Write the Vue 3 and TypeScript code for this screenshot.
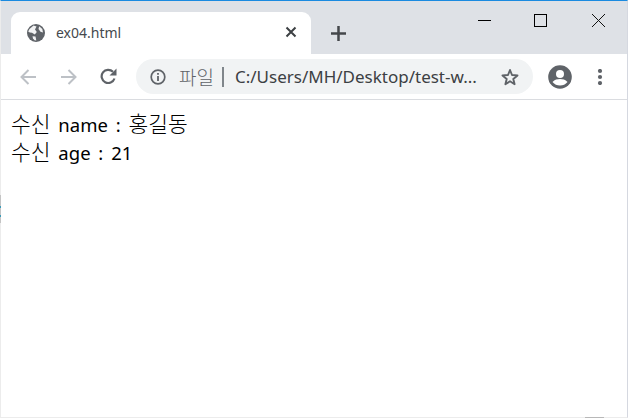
<script setup lang="ts">
// hangul runs are set larger than the latin ones, Noto's hangul is narrower than the original font
const lines = [
  [{ t: "수신", ko: true }, { t: " name : ", ko: false }, { t: "홍길동", ko: true }],
  [{ t: "수신", ko: true }, { t: " age : 21", ko: false }],
];
</script>

<template>
  <div class="window">
    <div class="tabstrip">
      <div class="tab">
        <svg class="globe" width="18" height="18" viewBox="0 0 18 18">
          <circle cx="9" cy="9" r="9" fill="#5f6368" />
          <path d="M2.500 5 6.500 1.600 9.500 2.500 8 5.500 9.800 8 7.800 10.500 5 8.800 2.800 8.500 1.200 7.500Z" fill="#f1f2f3" />
          <path d="M5.500 12.300 8.500 12.500 9.300 16.600 7.500 16.300 6 14.500Z" fill="#f1f2f3" />
          <path d="M12.200 2.200 15.300 5 16 8.500 13.500 7.800 11.500 5Z" fill="#f1f2f3" />
        </svg>
        <span class="tab-title">ex04.html</span>
        <svg class="tab-close" width="12" height="12" viewBox="0 0 12 12">
          <path d="M1.500 1.500 10.500 10.500M10.500 1.500 1.500 10.500" stroke="#3c4043" stroke-width="2" fill="none" />
        </svg>
      </div>
      <svg class="newtab" width="15" height="15" viewBox="0 0 15 15">
        <path d="M7.500 0V15M0 7.500H15" stroke="#44474b" stroke-width="2.500" fill="none" />
      </svg>
      <div class="controls">
        <svg class="ctl ctl-min" width="13" height="13" viewBox="0 0 13 13">
          <path d="M0 6.500H13" stroke="#000" fill="none" />
        </svg>
        <svg class="ctl ctl-max" width="13" height="13" viewBox="0 0 13 13">
          <rect x="0.500" y="0.500" width="12" height="12" stroke="#000" fill="none" />
        </svg>
        <svg class="ctl ctl-close" width="13" height="13" viewBox="0 0 13 13">
          <path d="M0 0 13 13M13 0 0 13" stroke="#111" fill="none" />
        </svg>
      </div>
    </div>

    <div class="toolbar">
      <svg class="nav nav-back" width="16" height="16" viewBox="0 0 16 16">
        <path d="M16 8H1.500M8.500 1 1.500 8 8.500 15" stroke="#bdc1c6" stroke-width="2" fill="none" />
      </svg>
      <svg class="nav nav-fwd" width="16" height="16" viewBox="0 0 16 16">
        <path d="M0 8H14.500M7.500 1 14.500 8 7.500 15" stroke="#bdc1c6" stroke-width="2" fill="none" />
      </svg>
      <svg class="nav nav-reload" width="17" height="17" viewBox="0 0 17 17">
        <path d="M14.500 10.500A6.600 6.600 0 1 1 13 3.800" stroke="#5f6368" stroke-width="2.200" fill="none" />
        <path d="M16.500 0.500V7.500H9.500Z" fill="#5f6368" />
      </svg>
      <div class="omnibox">
        <svg class="info" width="16" height="16" viewBox="0 0 16 16">
          <circle cx="8" cy="8" r="6.800" stroke="#5f6368" stroke-width="1.700" fill="none" />
          <path d="M7.100 7H8.900V12H7.100ZM7.100 4H8.900V5.800H7.100Z" fill="#5f6368" />
        </svg>
        <span class="scheme">파일</span>
        <span class="sep"></span>
        <span class="url">C:/Users/MH/Desktop/test-w...</span>
        <svg class="star" width="18" height="18" viewBox="0 0 18 18">
          <path d="M9 2 11 7 16.500 7.400 12.300 10.900 13.600 16.200 9 13.300 4.400 16.200 5.700 10.900 1.500 7.400 7 7Z" stroke="#5f6368" stroke-width="1.900" stroke-linejoin="round" fill="none" />
        </svg>
      </div>
      <svg class="avatar" width="24" height="24" viewBox="0 0 24 24">
        <circle cx="12" cy="12" r="11.800" fill="#5f6368" />
        <circle cx="12" cy="9" r="4" fill="#fff" />
        <path d="M4.500 17C6.500 14.600 9.500 14 12 14S17.500 14.600 19.500 17C17.500 19.500 15 20.500 12 20.500S6.500 19.500 4.500 17Z" fill="#fff" />
      </svg>
      <svg class="menu" width="6" height="16" viewBox="0 0 6 16">
        <circle cx="3" cy="2" r="2.100" fill="#5f6368" />
        <circle cx="3" cy="8" r="2.100" fill="#5f6368" />
        <circle cx="3" cy="14" r="2.100" fill="#5f6368" />
      </svg>
    </div>

    <div class="page">
      <div v-for="(line, i) in lines" :key="i" class="line">
        <span v-for="(run, j) in line" :key="j" :class="{ ko: run.ko }">{{ run.t }}</span>
      </div>
    </div>

    <!-- bits of other windows peeking out behind this one -->
    <div class="edge-left"></div>
    <div class="edge-bottom"></div>
  </div>
</template>

<style scoped>
.window {
  position: relative;
  width: 628px;
  height: 418px;
  box-sizing: border-box;
  border-top: 1px solid #1a8ae0;
  border-left: 1px solid #ececec;
  border-right: 1px solid #d5d8e0;
  border-bottom: 1px solid #ececec;
  display: flex;
  flex-direction: column;
  background: #fff;
  font-family: "Noto Sans", "Noto Sans CJK KR", sans-serif;
}

.tabstrip {
  height: 53px;
  background: #dee1e6;
  display: flex;
  align-items: flex-end;
  flex-shrink: 0;
}

.tab {
  width: 300px;
  height: 42px;
  margin-left: 10px;
  background: #fff;
  border-radius: 9px 9px 0 0;
  display: flex;
  align-items: center;
  box-sizing: border-box;
  padding: 0 14px 2px 16px;
  flex-shrink: 0;
}

.globe {
  margin-top: 2px;
}

.tab-title {
  margin-left: 11px;
  font-size: 14px;
  color: #45494d;
  flex: 1;
}

.newtab {
  margin: 0 0 13px 20px;
}

.controls {
  margin-left: auto;
  align-self: flex-start;
  display: flex;
  padding: 13px 22px 0 0;
}

.ctl-max {
  margin-left: 43px;
}

.ctl-close {
  margin-left: 45px;
}

.toolbar {
  height: 46px;
  box-sizing: border-box;
  border-bottom: 1px solid #dadce0;
  display: flex;
  align-items: center;
  flex-shrink: 0;
}

.nav-back {
  margin-left: 19px;
}

.nav-fwd {
  margin-left: 25px;
}

.nav-reload {
  margin-left: 23px;
}

.omnibox {
  width: 397px;
  height: 35px;
  margin-left: 19px;
  border-radius: 18px;
  background: #f1f3f4;
  display: flex;
  align-items: center;
  box-sizing: border-box;
  padding: 0 14px 0 14px;
}

.scheme {
  margin-left: 13px;
  font-size: 19px;
  font-weight: 300;
  color: #5f6368;
}

.sep {
  width: 2px;
  height: 20px;
  margin-left: 8px;
  background: #80868b;
}

.url {
  margin-left: 11px;
  font-size: 17px;
  color: #3c4043;
  white-space: nowrap;
  flex: 1;
}

.avatar {
  margin-left: 15px;
}

.menu {
  margin-left: 25px;
}

.page {
  flex: 1;
  padding: 10px 0 0 10px;
  font-size: 18.500px;
  word-spacing: 3px;
  color: #000;
}

.line {
  height: 28px;
  line-height: 28px;
  white-space: pre;
}

.ko {
  font-size: 21.500px;
  font-weight: 300;
}

.edge-left {
  position: absolute;
  left: -1px;
  top: 194px;
  width: 1px;
  height: 28px;
  background: linear-gradient(#c4c4c4 0 11px, #3a9ab8 11px 13px, #c4c4c4 13px 20px, #3a9ab8 20px 22px, #c4c4c4 22px);
}

.edge-bottom {
  position: absolute;
  left: 584px;
  bottom: -1px;
  width: 19px;
  height: 1px;
  background: #b8b8b8;
}
</style>
